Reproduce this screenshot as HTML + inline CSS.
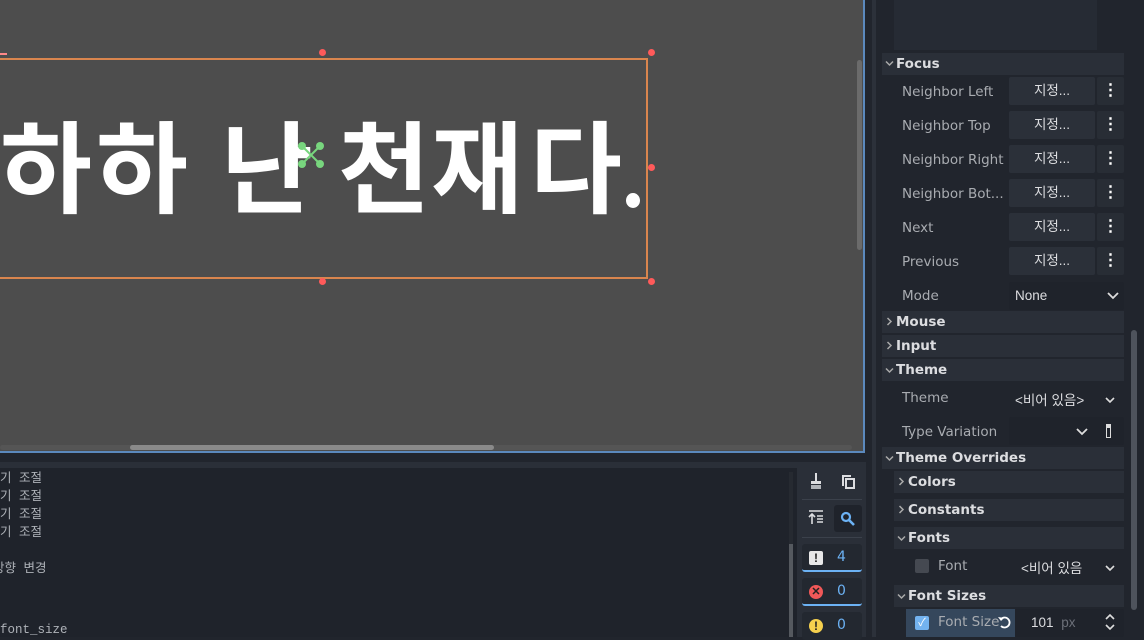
<!DOCTYPE html>
<html><head><meta charset="utf-8"><style>
*{margin:0;padding:0;box-sizing:border-box}
body{width:1144px;height:637px;overflow:hidden;background:#21252d;position:relative;font-family:"Liberation Sans","Noto Sans CJK KR",sans-serif}
.a{position:absolute}
.vp{left:0;top:0;width:865px;height:453px;background:#4d4d4d;border-right:2px solid #5b89bd;border-bottom:2px solid #5b89bd}
.big{position:absolute;top:112px;font-family:"Noto Sans CJK KR",sans-serif;font-weight:700;font-size:100px;line-height:100px;color:#fff}
.h{width:7px;height:7px;border-radius:50%;background:#ff5a5a;position:absolute}
.lbl{position:absolute;left:902px;font-family:"DejaVu Sans",sans-serif;font-size:13.5px;color:#a9acb1}
.hd{position:absolute;background:#2a2f38;height:22px;font-family:"DejaVu Sans",sans-serif;font-weight:700;font-size:13.5px;color:#dcdde0;line-height:22px}
.val{position:absolute;background:#2b3039;height:28px;border-radius:2px;color:#dcdde0;font-family:"Liberation Sans","Noto Sans CJK KR",sans-serif;font-size:13.5px;line-height:28px}
.keb{position:absolute;left:1097px;width:27px;height:28px;background:#282d35;border-radius:2px;color:#fff;text-align:center;font-weight:700;font-size:16px;line-height:28px}
.log{position:absolute;left:0;font-family:"Liberation Mono","Noto Sans CJK KR",monospace;font-size:12.5px;color:#aeb2b8}
.btn{position:absolute;left:802px;width:60px;height:28px;background:#232830;border-radius:3px}
.cv{position:absolute}
</style></head><body>
<div class="a vp"></div>
<div class="a" style="left:857px;top:60px;width:5px;height:190px;background:#6b6b6b;border-radius:3px"></div>
<div class="a" style="left:0;top:445px;width:852px;height:5px;background:#555;border-radius:3px"></div>
<div class="a" style="left:130px;top:445px;width:364px;height:5px;background:#8a8a8a;border-radius:3px"></div>
<div class="a" style="left:-2px;top:58px;width:650px;height:221px;border:2px solid #d9854e"></div>
<div class="a" style="left:0;top:53px;width:7px;height:2px;background:#f88"></div>
<div class="h" style="left:319px;top:49px"></div><div class="h" style="left:648px;top:49px"></div>
<div class="h" style="left:648px;top:164px"></div>
<div class="h" style="left:319px;top:278px"></div><div class="h" style="left:648px;top:278px"></div>
<span class="big" style="left:0">하</span><span class="big" style="left:96px">하</span>
<span class="big" style="left:221px">난</span><span class="big" style="left:338px">천</span>
<span class="big" style="left:431px">재</span><span class="big" style="left:530px">다</span>
<div class="a" style="left:626px;top:193px;width:14px;height:15px;border-radius:50%;background:#fff"></div>
<svg class="a" style="left:295px;top:139px" width="32" height="32" viewBox="0 0 32 32"><g stroke="#78d67e" stroke-width="2"><line x1="7" y1="7" x2="25" y2="25"/><line x1="25" y1="7" x2="7" y2="25"/></g><g fill="#78d67e"><circle cx="7" cy="7" r="4"/><circle cx="25" cy="7" r="4"/><circle cx="7" cy="25" r="4"/><circle cx="25" cy="25" r="4"/></g></svg>
<div class="a" style="left:872px;top:0;width:4px;height:637px;background:#2c313a"></div>
<div class="a" style="left:0;top:462px;width:866px;height:175px;background:#2a2f38"></div>
<div class="a" style="left:0;top:468px;width:797px;height:169px;background:#1f232b"></div>
<div class="a" style="left:789px;top:472px;width:4px;height:165px;background:#262a31"></div>
<div class="a" style="left:789px;top:544px;width:4px;height:93px;background:#55595f"></div>
<div class="log" style="top:467px">기 조절</div>
<div class="log" style="top:485px">기 조절</div>
<div class="log" style="top:503px">기 조절</div>
<div class="log" style="top:521px">기 조절</div>
<div class="log" style="top:557px;left:-7px">방향 변경</div>
<div class="log" style="top:623px">font_size</div>
<svg class="a" style="left:808px;top:472px" width="16" height="18"><rect x="7" y="1" width="2" height="8" fill="#dcdde0"/><rect x="3" y="9" width="10" height="3" fill="#dcdde0"/><rect x="3" y="13" width="10" height="4" fill="#b0b3b8"/></svg>
<svg class="a" style="left:840px;top:473px" width="16" height="16"><path d="M2 2h9v2H4v9H2z" fill="#dcdde0"/><rect x="6" y="6" width="8" height="9" fill="none" stroke="#dcdde0" stroke-width="2"/></svg>
<div class="a" style="left:802px;top:499px;width:60px;height:1px;background:#3b414b"></div>
<svg class="a" style="left:808px;top:510px" width="16" height="14"><path d="M1 1h14M9 6h6M9 9h6M9 12h6M4 4v10M1 7l3-3 3 3" stroke="#dcdde0" stroke-width="1.6" fill="none"/></svg>
<div class="a" style="left:834px;top:505px;width:28px;height:27px;background:#1f232b;border-radius:3px"></div>
<svg class="a" style="left:840px;top:511px" width="16" height="16"><circle cx="6" cy="6" r="4" stroke="#6cb2f4" stroke-width="2.2" fill="none"/><path d="M9 9l5 5" stroke="#6cb2f4" stroke-width="2.6"/></svg>
<div class="a" style="left:802px;top:537px;width:60px;height:1px;background:#3b414b"></div>
<div class="btn" style="top:544px;border-bottom:2px solid #6cb2f4"></div>
<div class="a" style="left:809px;top:551px;width:14px;height:14px;background:#e8e8e8;border-radius:2px;color:#222;font-weight:700;font-size:12px;text-align:center;line-height:14px">!</div>
<div class="a" style="left:837px;top:549px;color:#6cb2f4;font-family:'DejaVu Sans';font-size:14px">4</div>
<div class="btn" style="top:578px;border-bottom:2px solid #6cb2f4"></div>
<div class="a" style="left:809px;top:585px;width:14px;height:14px;background:#f05858;border-radius:50%;color:#222;font-weight:700;font-size:11px;text-align:center;line-height:14px">✕</div>
<div class="a" style="left:837px;top:583px;color:#6cb2f4;font-family:'DejaVu Sans';font-size:14px">0</div>
<div class="btn" style="top:612px"></div>
<div class="a" style="left:809px;top:619px;width:14px;height:14px;background:#f5d04e;border-radius:50%;color:#222;font-weight:700;font-size:12px;text-align:center;line-height:14px">!</div>
<div class="a" style="left:837px;top:617px;color:#6cb2f4;font-family:'DejaVu Sans';font-size:14px">0</div>
<!-- inspector -->
<div class="a" style="left:880px;top:0;width:248px;height:637px;background:#21252d"></div>
<div class="a" style="left:894px;top:0;width:203px;height:50px;background:#262b34"></div>
<div class="a" style="left:1131px;top:330px;width:6px;height:280px;background:#4e535c;border-radius:3px"></div>
<div class="hd" style="left:882px;top:53px;width:242px;padding-left:14px">Focus</div>
<div class="lbl" style="top:84px">Neighbor Left</div><div class="val" style="left:1009px;top:77px;width:86px;text-align:center">지정...</div><div class="keb" style="top:77px">⋮</div>
<div class="lbl" style="top:118px">Neighbor Top</div><div class="val" style="left:1009px;top:111px;width:86px;text-align:center">지정...</div><div class="keb" style="top:111px">⋮</div>
<div class="lbl" style="top:152px">Neighbor Right</div><div class="val" style="left:1009px;top:145px;width:86px;text-align:center">지정...</div><div class="keb" style="top:145px">⋮</div>
<div class="lbl" style="top:186px">Neighbor Bot...</div><div class="val" style="left:1009px;top:179px;width:86px;text-align:center">지정...</div><div class="keb" style="top:179px">⋮</div>
<div class="lbl" style="top:220px">Next</div><div class="val" style="left:1009px;top:213px;width:86px;text-align:center">지정...</div><div class="keb" style="top:213px">⋮</div>
<div class="lbl" style="top:254px">Previous</div><div class="val" style="left:1009px;top:247px;width:86px;text-align:center">지정...</div><div class="keb" style="top:247px">⋮</div>
<div class="lbl" style="top:288px">Mode</div><div class="val" style="left:1009px;top:282px;width:115px;padding-left:6px;background:#1f232b">None</div>
<svg class="a" style="left:1107px;top:292px" width="12" height="8"><path d="M1 1l5 5 5-5" stroke="#ddd" stroke-width="1.8" fill="none"/></svg>
<div class="hd" style="left:882px;top:311px;width:242px;padding-left:14px">Mouse</div>
<div class="hd" style="left:882px;top:335px;width:242px;padding-left:14px">Input</div>
<div class="hd" style="left:882px;top:359px;width:242px;padding-left:14px">Theme</div>
<div class="lbl" style="top:390px">Theme</div>
<div class="a" style="left:1015px;top:389px;color:#dcdde0;font-size:13.5px;font-family:'Liberation Sans','Noto Sans CJK KR',sans-serif">&lt;비어 있음&gt;</div>
<svg class="a" style="left:1105px;top:397px" width="10" height="7"><path d="M1 1l4 4 4-4" stroke="#ddd" stroke-width="1.6" fill="none"/></svg>
<div class="lbl" style="top:424px">Type Variation</div>
<div class="val" style="left:1009px;top:417px;width:115px;background:#1f232b"></div>
<svg class="a" style="left:1076px;top:428px" width="12" height="8"><path d="M1 1l5 5 5-5" stroke="#ddd" stroke-width="1.8" fill="none"/></svg>
<div class="a" style="left:1106px;top:424px;width:5px;height:14px;border:1.5px solid #ddd;border-top-width:4px"></div>
<div class="hd" style="left:882px;top:447px;width:242px;padding-left:14px">Theme Overrides</div>
<div class="hd" style="left:894px;top:471px;width:230px;padding-left:14px">Colors</div>
<div class="hd" style="left:894px;top:499px;width:230px;padding-left:14px">Constants</div>
<div class="hd" style="left:894px;top:527px;width:230px;padding-left:14px">Fonts</div>
<div class="a" style="left:915px;top:559px;width:14px;height:14px;background:#454951;border-radius:2px"></div>
<div class="lbl" style="left:938px;top:558px">Font</div>
<div class="a" style="left:1021px;top:557px;color:#dcdde0;font-size:13.5px;font-family:'Liberation Sans','Noto Sans CJK KR',sans-serif">&lt;비어 있음</div>
<svg class="a" style="left:1105px;top:565px" width="10" height="7"><path d="M1 1l4 4 4-4" stroke="#ddd" stroke-width="1.6" fill="none"/></svg>
<div class="hd" style="left:894px;top:585px;width:230px;padding-left:14px">Font Sizes</div>
<!-- chevrons -->
<svg class="cv" style="left:885px;top:60px" width="9" height="7"><path d="M1 1.5l3.5 3.5 3.5-3.5" stroke="#aaa" stroke-width="1.5" fill="none"/></svg>
<svg class="cv" style="left:886px;top:317px" width="7" height="9"><path d="M1.5 1l3.5 3.5-3.5 3.5" stroke="#aaa" stroke-width="1.5" fill="none"/></svg>
<svg class="cv" style="left:886px;top:341px" width="7" height="9"><path d="M1.5 1l3.5 3.5-3.5 3.5" stroke="#aaa" stroke-width="1.5" fill="none"/></svg>
<svg class="cv" style="left:885px;top:367px" width="9" height="7"><path d="M1 1.5l3.5 3.5 3.5-3.5" stroke="#aaa" stroke-width="1.5" fill="none"/></svg>
<svg class="cv" style="left:885px;top:455px" width="9" height="7"><path d="M1 1.5l3.5 3.5 3.5-3.5" stroke="#aaa" stroke-width="1.5" fill="none"/></svg>
<svg class="cv" style="left:898px;top:477px" width="7" height="9"><path d="M1.5 1l3.5 3.5-3.5 3.5" stroke="#aaa" stroke-width="1.5" fill="none"/></svg>
<svg class="cv" style="left:898px;top:505px" width="7" height="9"><path d="M1.5 1l3.5 3.5-3.5 3.5" stroke="#aaa" stroke-width="1.5" fill="none"/></svg>
<svg class="cv" style="left:897px;top:535px" width="9" height="7"><path d="M1 1.5l3.5 3.5 3.5-3.5" stroke="#aaa" stroke-width="1.5" fill="none"/></svg>
<svg class="cv" style="left:897px;top:593px" width="9" height="7"><path d="M1 1.5l3.5 3.5 3.5-3.5" stroke="#aaa" stroke-width="1.5" fill="none"/></svg>
<div class="a" style="left:906px;top:609px;width:109px;height:28px;background:#35475c"></div>
<div class="a" style="left:915px;top:616px;width:14px;height:14px;background:#73b3f0;border-radius:2px;color:#fff;font-size:11px;line-height:14px;text-align:center">✓</div>
<div class="lbl" style="left:938px;top:614px">Font Size</div>
<svg class="a" style="left:997px;top:615px" width="15" height="14"><path d="M4 4a5 5 0 1 1 0 7" stroke="#fff" stroke-width="1.8" fill="none"/><path d="M1 2l3 4 3-3z" fill="#fff"/></svg>
<div class="val" style="left:1015px;top:609px;width:109px;background:#1f232b;padding-left:16px">101 <span style="color:#6c7079;margin-left:4px">px</span></div>
<svg class="a" style="left:1104px;top:613px" width="12" height="18"><path d="M2 6l4-4 4 4M2 12l4 4 4-4" stroke="#ddd" stroke-width="1.6" fill="none"/></svg>
</body></html>
